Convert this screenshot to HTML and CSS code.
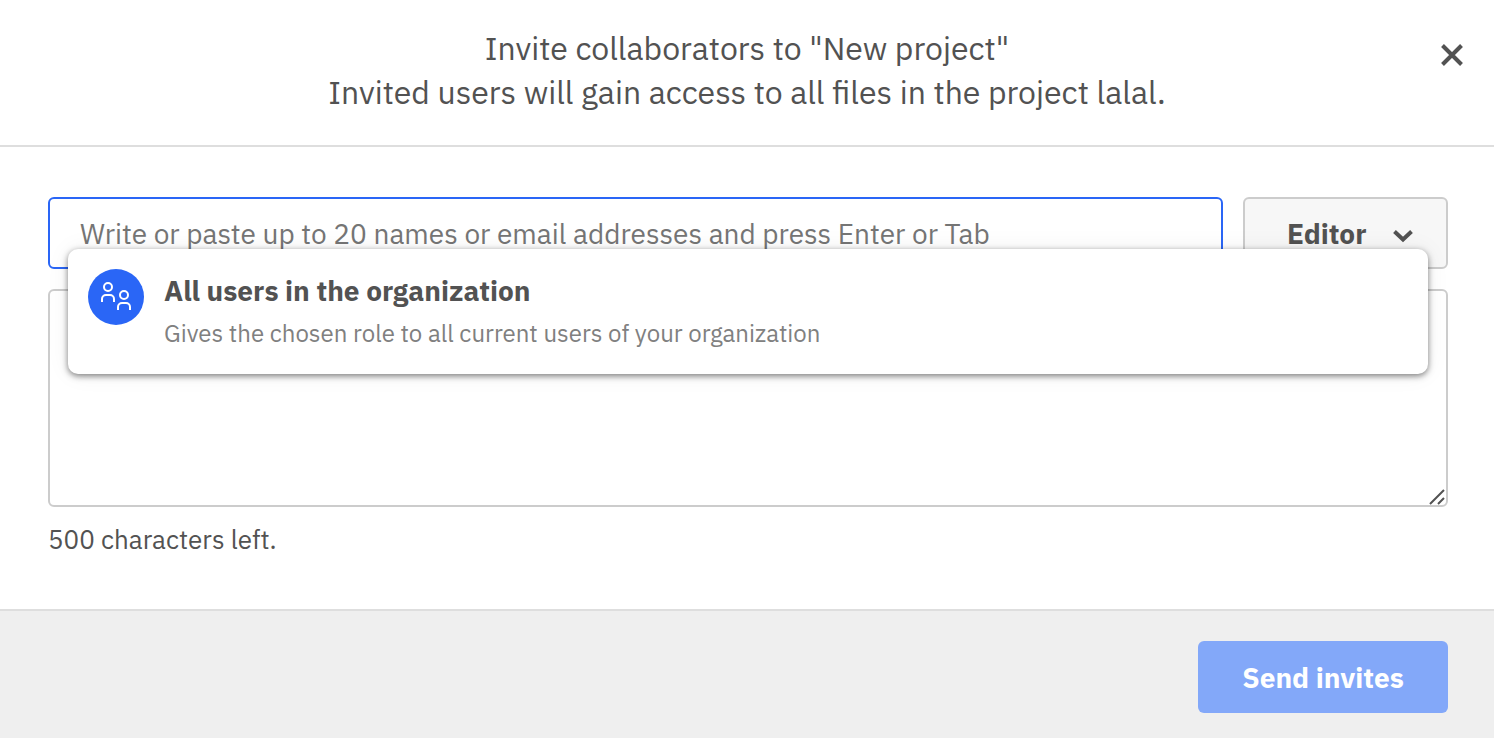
FILE: index.html
```html
<!DOCTYPE html>
<html lang="en">
<head>
    <meta charset="UTF-8">
    <meta name="viewport" content="width=device-width, initial-scale=1.0">
    <title>Invite collaborators</title>
    <link rel="stylesheet" href="styles.css">
</head>
<body>
    <form class="modal">
        <header class="modal-header">
            <h1 class="modal-title">Invite collaborators to "New project"<br>Invited users will gain access to all files in the project lalal.</h1>
            <button type="button" class="close-btn" aria-label="Close">
                <svg width="24" height="24" viewBox="0 0 24 24" fill="none" stroke="currentColor" stroke-width="4">
                    <path d="M2.5 2.5 21.5 21.5M21.5 2.5 2.5 21.5"/>
                </svg>
            </button>
        </header>

        <main class="modal-body">
            <div class="invite-row">
                <input type="text" class="invite-input" aria-label="Names or email addresses" placeholder="Write or paste up to 20 names or email addresses and press Enter or Tab">
                <div class="role">
                    <select class="role-select" aria-label="Role">
                        <option>Editor</option>
                    </select>
                    <svg class="role-arrow" width="22" height="14" viewBox="0 0 22 14" fill="none" stroke="currentColor" stroke-width="4">
                        <path d="M2.5 2.5 11 10.5 19.5 2.5"/>
                    </svg>
                </div>
                <!-- suggestions under the input -->
                <div class="suggestions">
                    <button type="button" class="suggestion">
                        <span class="avatar">
                            <svg width="32" height="32" viewBox="0 0 32 32" fill="none" stroke="currentColor" stroke-width="2">
                                <circle cx="8" cy="6" r="4"/>
                                <path d="M2 21v-3a4 4 0 0 1 4-4h4a4 4 0 0 1 4 4v3"/>
                                <circle cx="24" cy="14" r="4"/>
                                <path d="M18 29v-3a4 4 0 0 1 4-4h4a4 4 0 0 1 4 4v3"/>
                            </svg>
                        </span>
                        <span class="suggestion-text">
                            <strong class="suggestion-name">All users in the organization</strong>
                            <span class="suggestion-info">Gives the chosen role to all current users of your organization</span>
                        </span>
                    </button>
                </div>
            </div>

            <div class="message">
                <textarea class="message-input" aria-label="Message" maxlength="500"></textarea>
                <svg class="message-grip" width="16" height="16" viewBox="0 0 16 16" fill="none" stroke="currentColor" stroke-width="2">
                    <path d="M1 15 15 1M9 15l6-6"/>
                </svg>
            </div>
            <p class="counter">500 characters left.</p>
        </main>

        <footer class="modal-footer">
            <button type="submit" class="send-btn" disabled>Send invites</button>
        </footer>
    </form>
</body>
</html>
```
FILE: styles.css
```css
* {
    box-sizing: border-box;
    margin: 0;
    padding: 0;
}
body {
    background-color: #fff;
    color: #525252;
    font-family: "IBM Plex Sans", "Noto Sans", sans-serif;
    font-size: 28px;
}
button, input, select, textarea {
    font: inherit;
    color: inherit;
}
.modal {
    display: flex;
    flex-direction: column;
    min-height: 100vh;
}
.modal-header {
    position: relative;
    padding: 26px 80px 31px;
    border-bottom: 2px solid #dedede;
    text-align: center;
}
.modal-title {
    font-size: 32px;
    font-weight: 400;
    line-height: 44px;
}
.close-btn {
    position: absolute;
    top: 43px;
    right: 30px;
    width: 24px;
    height: 24px;
    border: none;
    background: none;
}
.close-btn svg {
    display: block;
}
.modal-body {
    flex: 1;
    padding: 50px 46px 48px 48px;
}
.invite-row {
    position: relative;
    display: flex;
    gap: 20px;
    margin-bottom: 20px;
}
.invite-input {
    flex: 1;
    min-width: 0;
    height: 72px;
    padding: 0 30px;
    border: 2px solid #2a66f6;
    border-radius: 6px;
    outline: none;
}
.invite-input::placeholder {
    color: #757575;
}
.role {
    position: relative;
    width: 205px;
}
.role-select {
    appearance: none;
    width: 100%;
    height: 72px;
    padding: 0 42px;
    border: 2px solid #ccc;
    border-radius: 6px;
    background-color: #f7f7f7;
    font-weight: 700;
}
.role-arrow {
    position: absolute;
    top: 32px;
    right: 34px;
    pointer-events: none;
}
.suggestions {
    position: absolute;
    top: 52px;
    left: 20px;
    right: 20px;
    z-index: 1;
    border-radius: 10px;
    background-color: #fff;
    box-shadow: 0 2px 6px rgba(0, 0, 0, 0.5), 0 0 24px rgba(0, 0, 0, 0.06);
}
.suggestion {
    display: flex;
    gap: 20px;
    width: 100%;
    padding: 20px 20px 21px;
    border: none;
    background: none;
    text-align: left;
}
.avatar {
    display: flex;
    align-items: center;
    justify-content: center;
    width: 56px;
    height: 56px;
    border-radius: 50%;
    background-color: #2a66f6;
    color: #fff;
}
.suggestion-text {
    display: flex;
    flex-direction: column;
}
.suggestion-name {
    line-height: 44px;
}
.suggestion-info {
    font-size: 24px;
    line-height: 40px;
    color: #808080;
}
.message {
    position: relative;
}
.message-input {
    display: block;
    width: 100%;
    height: 218px;
    padding: 20px 30px;
    border: 2px solid #ccc;
    border-radius: 6px;
    outline: none;
    resize: none;
}
.message-grip {
    position: absolute;
    right: 3px;
    bottom: 2px;
}
.counter {
    margin-top: 12px;
    font-size: 26px;
    line-height: 40px;
}
.modal-footer {
    display: flex;
    justify-content: flex-end;
    padding: 30px 46px 25px;
    border-top: 2px solid #dedede;
    background-color: #efefef;
}
.send-btn {
    width: 250px;
    height: 72px;
    border: none;
    border-radius: 6px;
    background-color: #83a8f9;
    color: #fff;
    font-weight: 700;
}
```
